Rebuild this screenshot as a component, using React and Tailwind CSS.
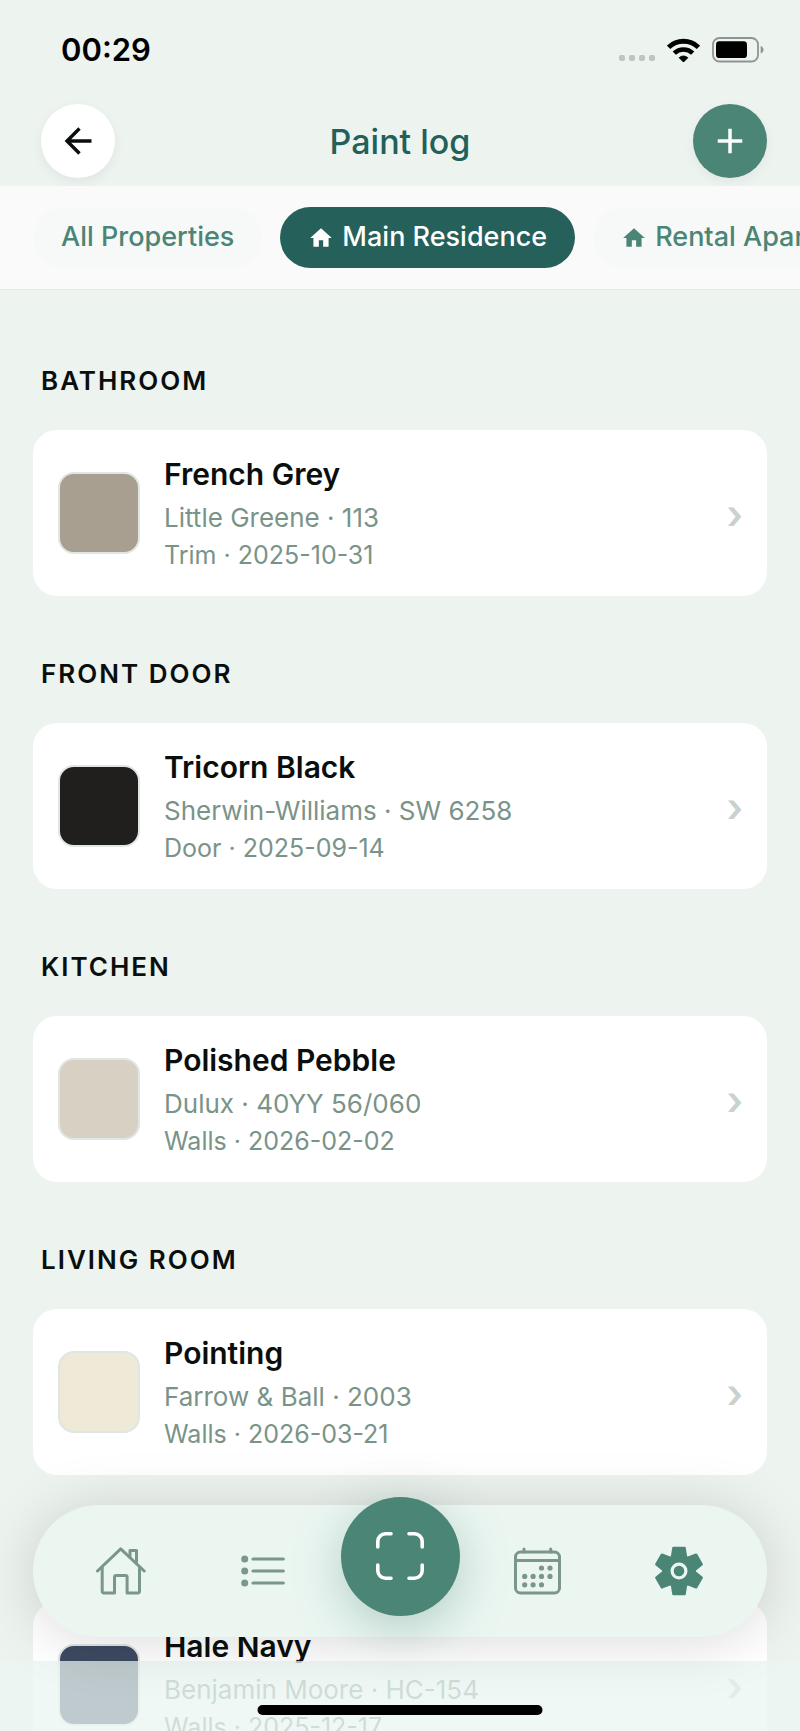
import { useState } from "react"
import { MdHome } from "react-icons/md"
import { Plus } from "lucide-react"

const PROPERTIES = [
  { id: "all", label: "All Properties", icon: false },
  { id: "main", label: "Main Residence", icon: true },
  { id: "rental", label: "Rental Apartment", icon: true },
]

const ROOMS = [
  { room: "Bathroom", name: "French Grey", brand: "Little Greene", code: "113", surface: "Trim", date: "2025-10-31", color: "#a89f91" },
  { room: "Front Door", name: "Tricorn Black", brand: "Sherwin-Williams", code: "SW 6258", surface: "Door", date: "2025-09-14", color: "#201f1d" },
  { room: "Kitchen", name: "Polished Pebble", brand: "Dulux", code: "40YY 56/060", surface: "Walls", date: "2026-02-02", color: "#d8d1c3" },
  { room: "Living Room", name: "Pointing", brand: "Farrow & Ball", code: "2003", surface: "Walls", date: "2026-03-21", color: "#efe9d7" },
  { room: "Primary Bedroom", name: "Hale Navy", brand: "Benjamin Moore", code: "HC-154", surface: "Walls", date: "2025-12-17", color: "#3d4a63" },
]

const GEAR_ANGLES = [0, 60, 120, 180, 240, 300]

function WifiIcon() {
  return (
    <svg width="33" height="25" viewBox="0 0 33 25" fill="none" stroke="black" aria-hidden="true">
      <path d="M1.6 9.3A21.4 21.4 0 0 1 31.4 9.3" strokeWidth="4.8" />
      <path d="M7.3 15.2A13.2 13.2 0 0 1 25.7 15.2" strokeWidth="4.6" />
      <path d="M16.5 24 12.2 19.7A6.4 6.4 0 0 1 20.8 19.7Z" fill="black" strokeWidth="1" strokeLinejoin="round" />
    </svg>
  )
}

function BatteryIcon() {
  return (
    <svg width="52" height="26" viewBox="0 0 52 26" fill="none" aria-hidden="true">
      <rect x="1" y="1" width="45" height="23.5" rx="6.5" stroke="#8f9492" strokeWidth="1.8" />
      <rect x="4" y="4.3" width="31" height="16.8" rx="3.4" fill="black" />
      <path d="M48.7 9v7.6c1.7-.6 2.8-2 2.8-3.8s-1.1-3.2-2.8-3.8Z" fill="#8f9492" />
    </svg>
  )
}

function BackArrow() {
  return (
    <svg width="28" height="28" viewBox="0 0 28 28" fill="none" stroke="#0a0f0d" strokeWidth="3.4" aria-hidden="true">
      <path d="M27.5 14H3M15.5 1.5 3 14 15.5 26.5" />
    </svg>
  )
}

function HouseIcon() {
  return (
    <svg width="50" height="48" viewBox="0 0 50 48" fill="none" stroke="currentColor" strokeWidth="3" strokeLinecap="round" strokeLinejoin="round" aria-hidden="true">
      <path d="M1.5 24 24.7 1.8 48.2 24" />
      <path d="M34 9.5V3.5h6.5v12.5" />
      <path d="M6.2 20.5V44.5a1.4 1.4 0 0 0 1.4 1.4H18.5V30.2a1.6 1.6 0 0 1 1.6-1.6h9.4a1.6 1.6 0 0 1 1.6 1.6V45.9H42.1a1.4 1.4 0 0 0 1.4-1.4V20.5" />
    </svg>
  )
}

function ListIcon() {
  return (
    <svg width="44" height="32" viewBox="0 0 44 32" fill="none" aria-hidden="true">
      {[4, 16, 28].map((y) => (
        <g key={y}>
          <circle cx="3.7" cy={y} r="3.5" fill="currentColor" />
          <path d={`M12 ${y}H42.3`} stroke="currentColor" strokeWidth="3.2" strokeLinecap="round" />
        </g>
      ))}
    </svg>
  )
}

function ScanIcon() {
  return (
    <svg width="48" height="48" viewBox="0 0 48 48" fill="none" stroke="currentColor" strokeWidth="3.6" strokeLinecap="round" aria-hidden="true">
      <path d="M1.8 15V9.5a7.7 7.7 0 0 1 7.7-7.7H15" />
      <path d="M33 1.8h5.5a7.7 7.7 0 0 1 7.7 7.7V15" />
      <path d="M46.2 33v5.5a7.7 7.7 0 0 1-7.7 7.7H33" />
      <path d="M15 46.2H9.5a7.7 7.7 0 0 1-7.7-7.7V33" />
    </svg>
  )
}

function CalendarIcon() {
  const dots = [
    [27.5, 21], [36, 21],
    [10.7, 29.4], [19.1, 29.4], [27.5, 29.4], [36, 29.4],
    [10.7, 37.8], [19.1, 37.8], [27.5, 37.8],
  ]
  return (
    <svg width="47" height="48" viewBox="0 0 47 48" fill="none" stroke="currentColor" strokeWidth="3" aria-hidden="true">
      <rect x="1.5" y="5" width="44" height="41" rx="5" />
      <path d="M1.5 13.5h44" />
      <path d="M10 2v3M36.7 2v3" strokeLinecap="round" />
      {dots.map(([x, y]) => (
        <circle key={`${x}-${y}`} cx={x} cy={y} r="2.6" fill="currentColor" stroke="none" />
      ))}
    </svg>
  )
}

function GearIcon() {
  return (
    <svg width="50" height="50" viewBox="-25 -25 50 50" fill="currentColor" aria-hidden="true">
      <circle r="16.8" />
      {GEAR_ANGLES.map((angle) => (
        <path
          key={angle}
          transform={`rotate(${angle})`}
          d="M-5.6 -23H5.6L7 -14H-7Z"
          stroke="currentColor"
          strokeWidth="2.4"
          strokeLinejoin="round"
        />
      ))}
      <circle r="6.9" fill="none" stroke="#ebf6f1" strokeWidth="3.2" />
    </svg>
  )
}

function StatusBar() {
  return (
    <div className="flex h-[88px] items-center justify-between pt-3 pr-9 pl-[61px]">
      <span className="text-[31px] font-semibold text-black">00:29</span>
      <div className="flex items-center gap-3">
        <div className="flex gap-1 pt-4">
          <span className="size-1.5 rounded-xs bg-[#bec4c1]" />
          <span className="size-1.5 rounded-xs bg-[#bec4c1]" />
          <span className="size-1.5 rounded-xs bg-[#bec4c1]" />
          <span className="size-1.5 rounded-xs bg-[#bec4c1]" />
        </div>
        <WifiIcon />
        <BatteryIcon />
      </div>
    </div>
  )
}

function PaintCard({ paint }) {
  return (
    <section>
      <h2 className="pt-[62px] pb-[33px] pl-2 text-[26px] leading-8 font-semibold tracking-[2px] text-[#0a0f0d] uppercase">
        {paint.room}
      </h2>
      <a href="#" className="flex items-center gap-6 rounded-3xl bg-white py-[23px] pr-6 pl-[25px]">
        <span
          className="size-[82px] shrink-0 rounded-2xl border-2 border-[#dfe6e3]"
          style={{ backgroundColor: paint.color }}
        />
        <div className="min-w-0 flex-1">
          <h3 className="mb-1 text-[30px] leading-[42px] font-semibold text-[#0a0f0d]">{paint.name}</h3>
          <p className="text-[26px] leading-[38px] text-[#7a9388]">
            {paint.brand} · {paint.code}
          </p>
          <p className="text-[25px] leading-9 text-[#7a9388]">
            {paint.surface} · {paint.date}
          </p>
        </div>
        <span className="pt-1 text-[40px] leading-none font-semibold text-[#c8d2ce]" aria-hidden="true">›</span>
      </a>
    </section>
  )
}

function TabBar() {
  return (
    <nav className="absolute inset-x-[33px] bottom-[94px] flex h-[132px] items-center rounded-full bg-[#ebf6f1] px-[17px] text-[#7b968c] shadow-[0_4px_60px_rgba(0,0,0,0.15)]">
      <button aria-label="Home" className="flex flex-1 justify-center"><HouseIcon /></button>
      <button aria-label="Tasks" className="flex flex-1 justify-center"><ListIcon /></button>
      <div className="flex w-[132px] justify-center">
        <button
          aria-label="Scan"
          className="-mt-[30px] flex size-[119px] shrink-0 items-center justify-center rounded-full bg-[#4b8575] text-white shadow-[0_12px_48px_rgba(75,133,117,0.35)]"
        >
          <ScanIcon />
        </button>
      </div>
      <button aria-label="Calendar" className="flex flex-1 justify-center"><CalendarIcon /></button>
      <button aria-label="Settings" className="flex flex-1 justify-center text-[#4b8575]"><GearIcon /></button>
    </nav>
  )
}

export default function App() {
  const [selected, setSelected] = useState("main")

  return (
    <div className="relative flex h-screen flex-col overflow-hidden bg-[#edf3ef] font-['Inter',sans-serif]">
      <StatusBar />

      <header className="grid h-[98px] shrink-0 grid-cols-[1fr_auto_1fr] items-center px-[33px] pt-2">
        <button
          aria-label="Back"
          className="ml-2 flex size-[74px] items-center justify-center rounded-full bg-white shadow-[0_4px_12px_rgba(0,0,0,0.06)]"
        >
          <BackArrow />
        </button>
        <h1 className="text-[34px] font-medium text-[#22605a]">Paint log</h1>
        <button
          aria-label="Add paint"
          className="flex size-[74px] items-center justify-center justify-self-end rounded-full bg-[#4b8575] text-white shadow-[0_4px_12px_rgba(0,0,0,0.05)]"
        >
          <Plus size={42} strokeWidth={2} strokeLinecap="butt" />
        </button>
      </header>

      {/* Property filter */}
      <div className="flex shrink-0 gap-[18px] overflow-hidden border-b border-[#e3e9e6] bg-[#fafafa] px-[33px] py-[21px]">
        {PROPERTIES.map((p) => (
          <button
            key={p.id}
            onClick={() => setSelected(p.id)}
            className={`flex h-[61px] shrink-0 items-center gap-2 rounded-full px-7 text-[27px] font-medium whitespace-nowrap ${
              selected === p.id ? "bg-[#26605a] text-white" : "bg-[#f7f9f8] text-[#4b8575]"
            }`}
          >
            {p.icon && <MdHome size={26} />}
            {p.label}
          </button>
        ))}
      </div>

      <main className="min-h-0 flex-1 overflow-hidden px-[33px] pt-[13px]">
        {ROOMS.map((paint) => (
          <PaintCard key={paint.room} paint={paint} />
        ))}
      </main>

      <div className="absolute inset-x-0 bottom-0 h-[70px] bg-[#ebf6f1]/75" />
      <TabBar />
      <div className="absolute bottom-4 left-1/2 h-[10px] w-[285px] -translate-x-1/2 rounded-full bg-black" />
    </div>
  )
}
